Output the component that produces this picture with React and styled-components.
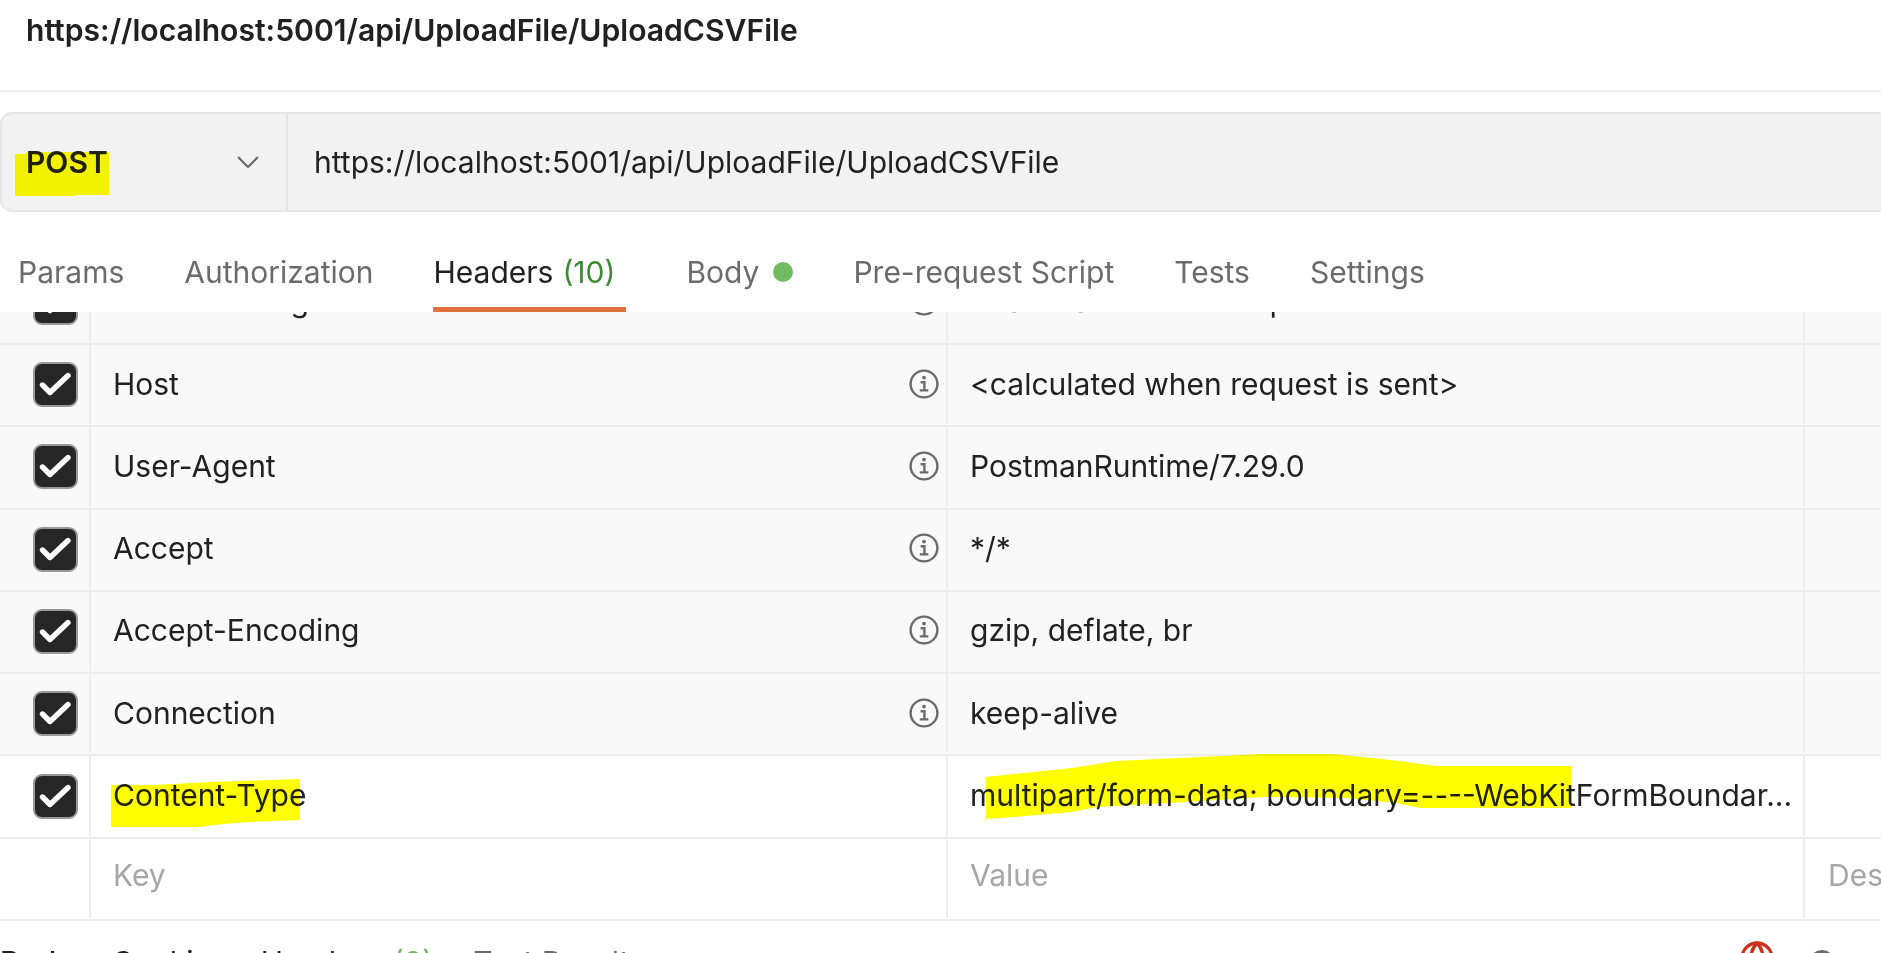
import styled, { createGlobalStyle } from "styled-components";
import { Globe } from "lucide-react";

const GlobalStyle = createGlobalStyle`
  html, body {
    margin: 0;
    padding: 0;
    background: #fff;
    overflow: hidden;
  }
`;

const tabs = [
  { name: "Params" },
  { name: "Authorization" },
  { name: "Headers", count: "(10)", active: true },
  { name: "Body", dot: true },
  { name: "Pre-request Script" },
  { name: "Tests" },
  { name: "Settings" },
];

const rows = [
  { name: "Content-Length", value: "<calculated when request is sent>", info: true },
  { name: "Host", value: "<calculated when request is sent>", info: true },
  { name: "User-Agent", value: "PostmanRuntime/7.29.0", info: true },
  { name: "Accept", value: "*/*", info: true },
  { name: "Accept-Encoding", value: "gzip, deflate, br", info: true },
  { name: "Connection", value: "keep-alive", info: true },
  { name: "Content-Type", value: "multipart/form-data; boundary=----WebKitFormBoundar...", plain: true },
];

const InfoIcon = () => (
  <svg width="30" height="30" viewBox="0 0 30 30" fill="none" stroke="#6b6b6b" strokeWidth="2.4">
    <circle cx="15" cy="15" r="13.4" />
    <circle cx="15" cy="8.6" r="1.9" fill="#6b6b6b" stroke="none" />
    <path d="M11.6 13.2H15.4V21.4M10.8 21.4H19.4" />
  </svg>
);

const App = () => {
  return (
    <Page>
      <GlobalStyle />
      <Title>https://localhost:5001/api/UploadFile/UploadCSVFile</Title>
      <UrlBar>
        <Method>
          POST
          <svg width="24" height="14" viewBox="0 0 24 14" fill="none" stroke="#6b6b6b" strokeWidth="2.2">
            <path d="M2 2L12 12L22 2" />
          </svg>
        </Method>
        <UrlText>https://localhost:5001/api/UploadFile/UploadCSVFile</UrlText>
      </UrlBar>
      <TabRow>
        {tabs.map((t) => (
          <Tab key={t.name} $active={t.active}>
            {t.name}
            {t.count && <Count>{t.count}</Count>}
            {t.dot && <Dot />}
          </Tab>
        ))}
      </TabRow>
      <Scroller>
        {rows.map((r) => (
          <Row key={r.name} $plain={r.plain}>
            <CheckCell>
              <CheckBox>
                <svg width="41" height="41" viewBox="0 0 41 41" fill="none" stroke="#fff" strokeWidth="5.4" strokeLinecap="round" strokeLinejoin="round">
                  <path d="M7.5 21L15 28.5L33 11.5" />
                </svg>
              </CheckBox>
            </CheckCell>
            <KeyCell>
              {r.name}
              {r.info && <InfoIcon />}
            </KeyCell>
            <ValueCell>{r.value}</ValueCell>
            <DescCell />
          </Row>
        ))}
        <Row $plain>
          <CheckCell />
          <KeyCell $muted>Key</KeyCell>
          <ValueCell $muted>Value</ValueCell>
          <DescCell $muted>Description</DescCell>
        </Row>
      </Scroller>
      <Footer>
        <FooterTab $first>Body</FooterTab>
        <FooterTab>Cookies</FooterTab>
        <FooterTab>
          Headers<FooterCount>(8)</FooterCount>
        </FooterTab>
        <FooterTab $muted>Test Results</FooterTab>
        <FooterIcons>
          <Globe size={36} color="#c9321c" strokeWidth={2.2} />
          <StatusDot />
        </FooterIcons>
      </Footer>
      <Marks viewBox="0 0 1881 953">
        <path d="M15 154H26V152H109V195H76V196H15Z" />
        <path d="M111 785L154 785L210 782L300 779V820L250 822L223 824L199 827H140L111 827Z" />
        <path d="M986 777L1014 774L1072 768L1116 761L1263 754H1333L1391 760L1436 766H1571V808H1420L1397 803L1346 798L1263 797L1186 802L1097 807L1072 812L1014 817L986 819Z" />
      </Marks>
    </Page>
  );
};

const Page = styled.div`
  position: relative;
  height: 953px;
  overflow: hidden;
  font-family: Inter, "Noto Sans", sans-serif;
  font-size: 30px;
  color: #212121;
  background: #fff;
`;

const Title = styled.div`
  height: 34px;
  padding: 13px 26px 43px;
  font-size: 30.1px;
  font-weight: 600;
  line-height: 34px;
  border-bottom: 2px solid #ededed;
`;

const UrlBar = styled.div`
  display: flex;
  height: 100px;
  box-sizing: border-box;
  margin: 20px -12px 0 0;
  background: #f2f2f2;
  border: 2px solid #e6e6e6;
  border-radius: 12px;
`;

const Method = styled.div`
  width: 286px;
  box-sizing: border-box;
  padding: 0 26px 0 24px;
  display: flex;
  align-items: center;
  justify-content: space-between;
  font-weight: 600;
  border-right: 2px solid #e6e6e6;
`;

const UrlText = styled.div`
  display: flex;
  align-items: center;
  padding-left: 26px;
`;

const TabRow = styled.div`
  display: flex;
  align-items: flex-end;
  gap: 60px;
  height: 100px;
  padding-left: 18px;
`;

const Tab = styled.div`
  display: flex;
  align-items: center;
  line-height: 32px;
  padding: 0 ${(p) => (p.$active ? "11px" : "0")} 19px 0;
  border-bottom: 5px solid ${(p) => (p.$active ? "#e0703c" : "transparent")};
  color: ${(p) => (p.$active ? "#212121" : "#6b6b6b")};
`;

const Count = styled.span`
  margin-left: 9px;
  color: #3f8a38;
`;

const Dot = styled.span`
  width: 20px;
  height: 20px;
  margin-left: 14px;
  border-radius: 50%;
  background: #72bb62;
`;

const Scroller = styled.div`
  height: 609px;
  display: flex;
  flex-direction: column;
  justify-content: flex-end;
  overflow: hidden;
`;

const Row = styled.div`
  flex: none;
  display: grid;
  grid-template-columns: 91px 857px 857px 1fr;
  height: 82.3px;
  box-sizing: border-box;
  border-bottom: 2px solid #ededed;
  background: ${(p) => (p.$plain ? "#fff" : "#f9f9f9")};
`;

const CheckCell = styled.div`
  display: flex;
  align-items: center;
  padding-left: 33px;
  margin-bottom: 1px;
  border-right: 2px solid #ededed;
`;

const CheckBox = styled.span`
  display: flex;
  width: 45px;
  height: 45px;
  box-sizing: border-box;
  border: 2px solid #999;
  border-radius: 9px;
  background: #262626;
`;

const KeyCell = styled.div`
  display: flex;
  align-items: center;
  justify-content: space-between;
  padding: 0 7px ${(p) => (p.$muted ? "7px" : "2px")} 22px;
  margin-bottom: 1px;
  border-right: 2px solid #ededed;
  color: ${(p) => (p.$muted ? "#a6a6a6" : "#212121")};
`;

const ValueCell = styled.div`
  display: flex;
  align-items: center;
  padding: 0 0 ${(p) => (p.$muted ? "7px" : "2px")} 22px;
  margin-bottom: 1px;
  border-right: 2px solid #ededed;
  white-space: nowrap;
  overflow: hidden;
  color: ${(p) => (p.$muted ? "#a6a6a6" : "#212121")};
`;

const DescCell = styled.div`
  display: flex;
  align-items: center;
  padding: 0 0 ${(p) => (p.$muted ? "7px" : "2px")} 23px;
  white-space: nowrap;
  overflow: hidden;
  color: #a6a6a6;
`;

const Footer = styled.div`
  display: flex;
  gap: 34px;
  padding-top: 25px;
  line-height: 32px;
`;

const FooterTab = styled.span`
  font-weight: ${(p) => (p.$first ? 500 : 400)};
  margin-right: ${(p) => (p.$first ? "4px" : "0")};
  padding-left: ${(p) => (p.$muted ? "6px" : "0")};
  color: ${(p) => (p.$muted ? "#6b6b6b" : "#212121")};
`;

const FooterCount = styled.span`
  margin-left: 12px;
  color: #72bb62;
`;

const FooterIcons = styled.div`
  display: flex;
  gap: 34px;
  margin: -6px 0 0 auto;
  padding-right: 46px;
`;

const StatusDot = styled.span`
  width: 26px;
  height: 26px;
  margin-top: 10px;
  border-radius: 50%;
  background: #6b6b6b;
`;

const Marks = styled.svg`
  position: absolute;
  top: 0;
  left: 0;
  width: 1881px;
  height: 953px;
  fill: #ffff00;
  mix-blend-mode: multiply;
  pointer-events: none;
`;

export default App;
